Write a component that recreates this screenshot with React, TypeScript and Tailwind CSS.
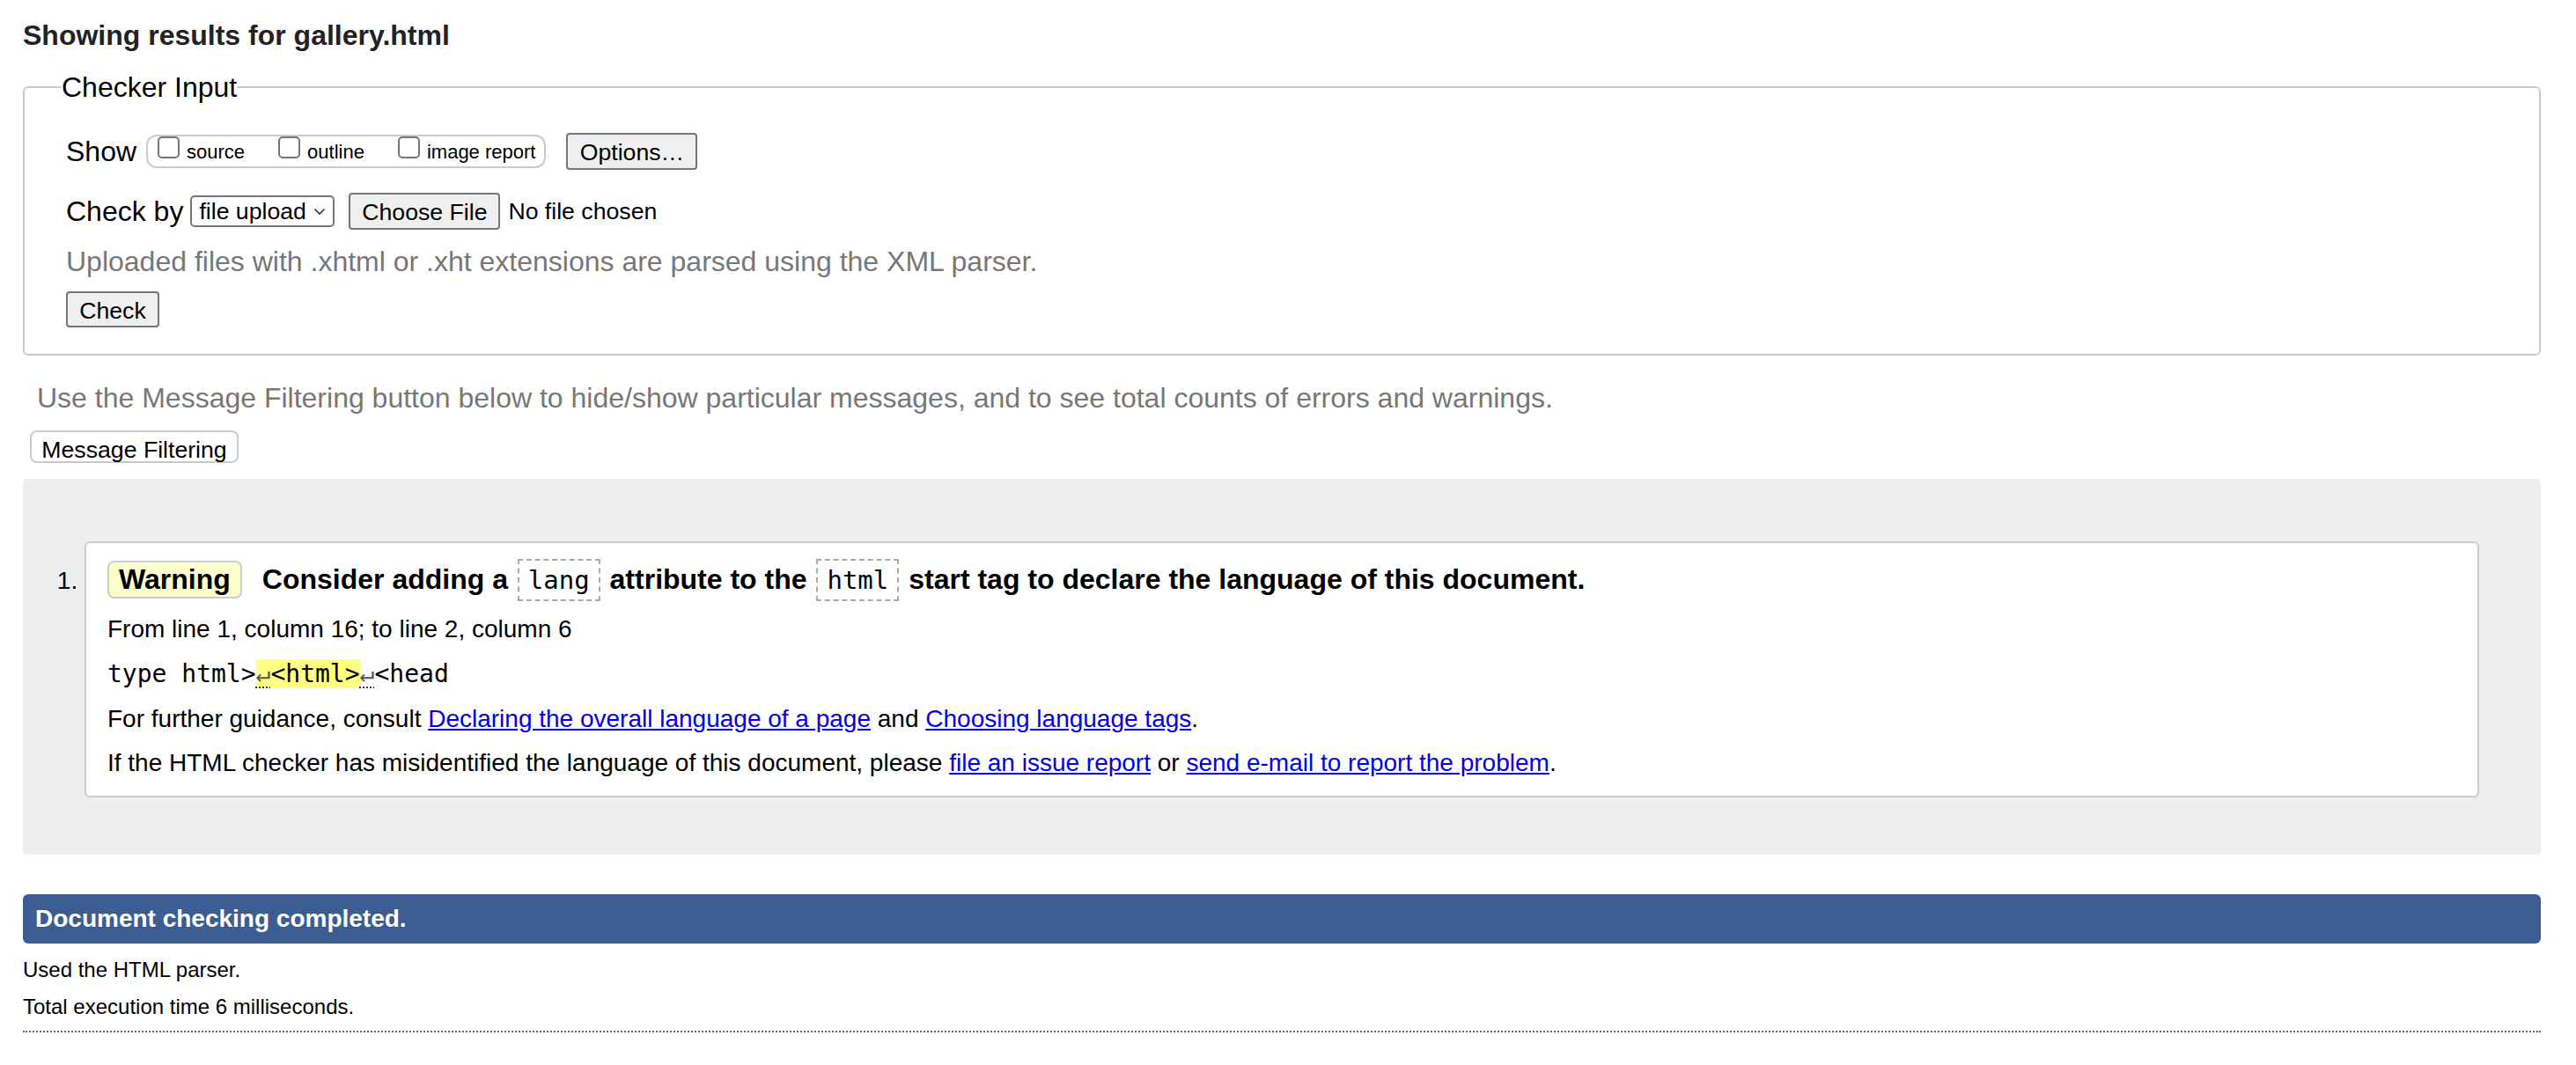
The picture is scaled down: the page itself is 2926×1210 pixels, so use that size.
export default function App() {
  const box = "inline-block align-baseline w-[25px] h-[25px] border-2 border-[#767676] rounded-[5px] bg-white mr-[8px]"
  const code = "inline-block align-baseline border-2 border-dashed border-[#aaa] px-[10px] leading-[44px] text-[29px] font-normal font-['DejaVu_Sans_Mono',monospace] mx-[2px]"
  const link = "text-[#0000ee] underline decoration-[#0000ee]"
  const ret = "text-[#555] underline decoration-dotted decoration-[#333] decoration-2 underline-offset-[5px]"

  return (
    <div className="w-[2926px] min-h-screen bg-white pl-[26px] pr-[40px] pb-[40px] text-black font-['Liberation_Sans',Arial,sans-serif]">
      <h2 className="pt-[20px] text-[32px] leading-[40px] font-bold text-[#222]">Showing results for gallery.html</h2>

      {/* checker input form */}
      <fieldset className="mt-[19px] border-2 border-[#ccc] rounded-[6px] pb-[30px]">
        <legend className="ml-[42px] text-[32px] leading-[40px]">Checker Input</legend>

        <div className="pl-[47px]">
          <div className="mt-[32px] flex items-center h-[42px]">
            <span className="text-[32px]">Show</span>
            <span className="ml-[11px] inline-block h-[38px] border-2 border-[#ccc] rounded-[12px] pl-[11px] pr-[10px] text-[22px] leading-[34px]">
              <span className={box} />source
              <span className={box + " ml-[38px]"} />outline
              <span className={box + " ml-[38px]"} />image report
            </span>
            <button className="ml-[23px] w-[149px] h-[42px] border-2 border-[#767676] rounded-[4px] bg-[#efefef] text-[26.67px]">
              Options…
            </button>
          </div>

          <div className="mt-[26px] flex items-center h-[42px]">
            <span className="text-[32px]">Check by</span>
            <span className="ml-[8px] flex items-center w-[164px] h-[36px] border-2 border-[#767676] rounded-[5px] bg-white pl-[8px] pr-[6px] text-[26.67px]">
              <span className="flex-1">file upload</span>
              <svg width="14" height="9" viewBox="0 0 14 9" className="mr-[2px]">
                <path d="M1.5 1.5 L7 7 L12.5 1.5" fill="none" stroke="#333" strokeWidth="1.6" />
              </svg>
            </span>
            <button className="ml-[16px] w-[172px] h-[42px] border-2 border-[#767676] rounded-[4px] bg-[#efefef] text-[26.67px]">
              Choose File
            </button>
            <span className="ml-[9px] text-[26.67px]">No file chosen</span>
          </div>

          <p className="mt-[16px] text-[32px] leading-[40px] text-[#777]">
            Uploaded files with .xhtml or .xht extensions are parsed using the XML parser.
          </p>

          <button className="mt-[14px] w-[106px] h-[41px] border-2 border-[#767676] rounded-[4px] bg-[#efefef] text-[26.67px]">
            Check
          </button>
        </div>
      </fieldset>

      <p className="mt-[28px] ml-[16px] text-[32px] leading-[40px] text-[#777]">
        Use the Message Filtering button below to hide/show particular messages, and to see total counts of errors and warnings.
      </p>
      <button className="mt-[17px] ml-[8px] w-[237px] h-[37px] border-2 border-[#ccc] rounded-[8px] bg-white text-[26.67px]">
        Message Filtering
      </button>

      {/* results */}
      <div className="mt-[17px] bg-[#eee] rounded-[4px] pt-[71px] pb-[65px] pl-[70px] pr-[70px]">
        <ol className="list-decimal">
          <li className="border-2 border-[#ccc] rounded-[6px] bg-white px-[24px] pb-[17px] text-[28px] leading-[40px]">
            <div className="pt-[17px] text-[32px] font-bold leading-[48px]">
              <span className="inline-block align-baseline h-[43px] border-2 border-[#ccc] rounded-[8px] bg-[#ffffcc] px-[11px] leading-[39px]">
                Warning
              </span>
              <span className="ml-[23px]">Consider adding a</span> <span className={code}>lang</span> attribute to the{" "}
              <span className={code}>html</span> start tag to declare the language of this document.
            </div>
            <p className="mt-[12px]">From line 1, column 16; to line 2, column 6</p>
            <p className="mt-[11px] font-['DejaVu_Sans_Mono',monospace] whitespace-pre">
              type html&gt;
              <span className="bg-[#ffff80]">
                <span className={ret}>↵</span>&lt;html&gt;
              </span>
              <span className={ret}>↵</span>&lt;head
            </p>
            <p className="mt-[11px]">
              For further guidance, consult <a className={link}>Declaring the overall language of a page</a> and{" "}
              <a className={link}>Choosing language tags</a>.
            </p>
            <p className="mt-[10px]">
              If the HTML checker has misidentified the language of this document, please{" "}
              <a className={link}>file an issue report</a> or <a className={link}>send e-mail to report the problem</a>.
            </p>
          </li>
        </ol>
      </div>

      <div className="mt-[45px] h-[56px] flex items-center rounded-[6px] bg-[#3c5d91] pl-[14px] text-[28px] font-bold text-white">
        Document checking completed.
      </div>
      <p className="mt-[14px] text-[24px] leading-[32px]">Used the HTML parser.</p>
      <p className="mt-[10px] text-[24px] leading-[32px]">Total execution time 6 milliseconds.</p>
      <div className="mt-[11px] border-t-2 border-dotted border-[#666]" />
    </div>
  )
}
